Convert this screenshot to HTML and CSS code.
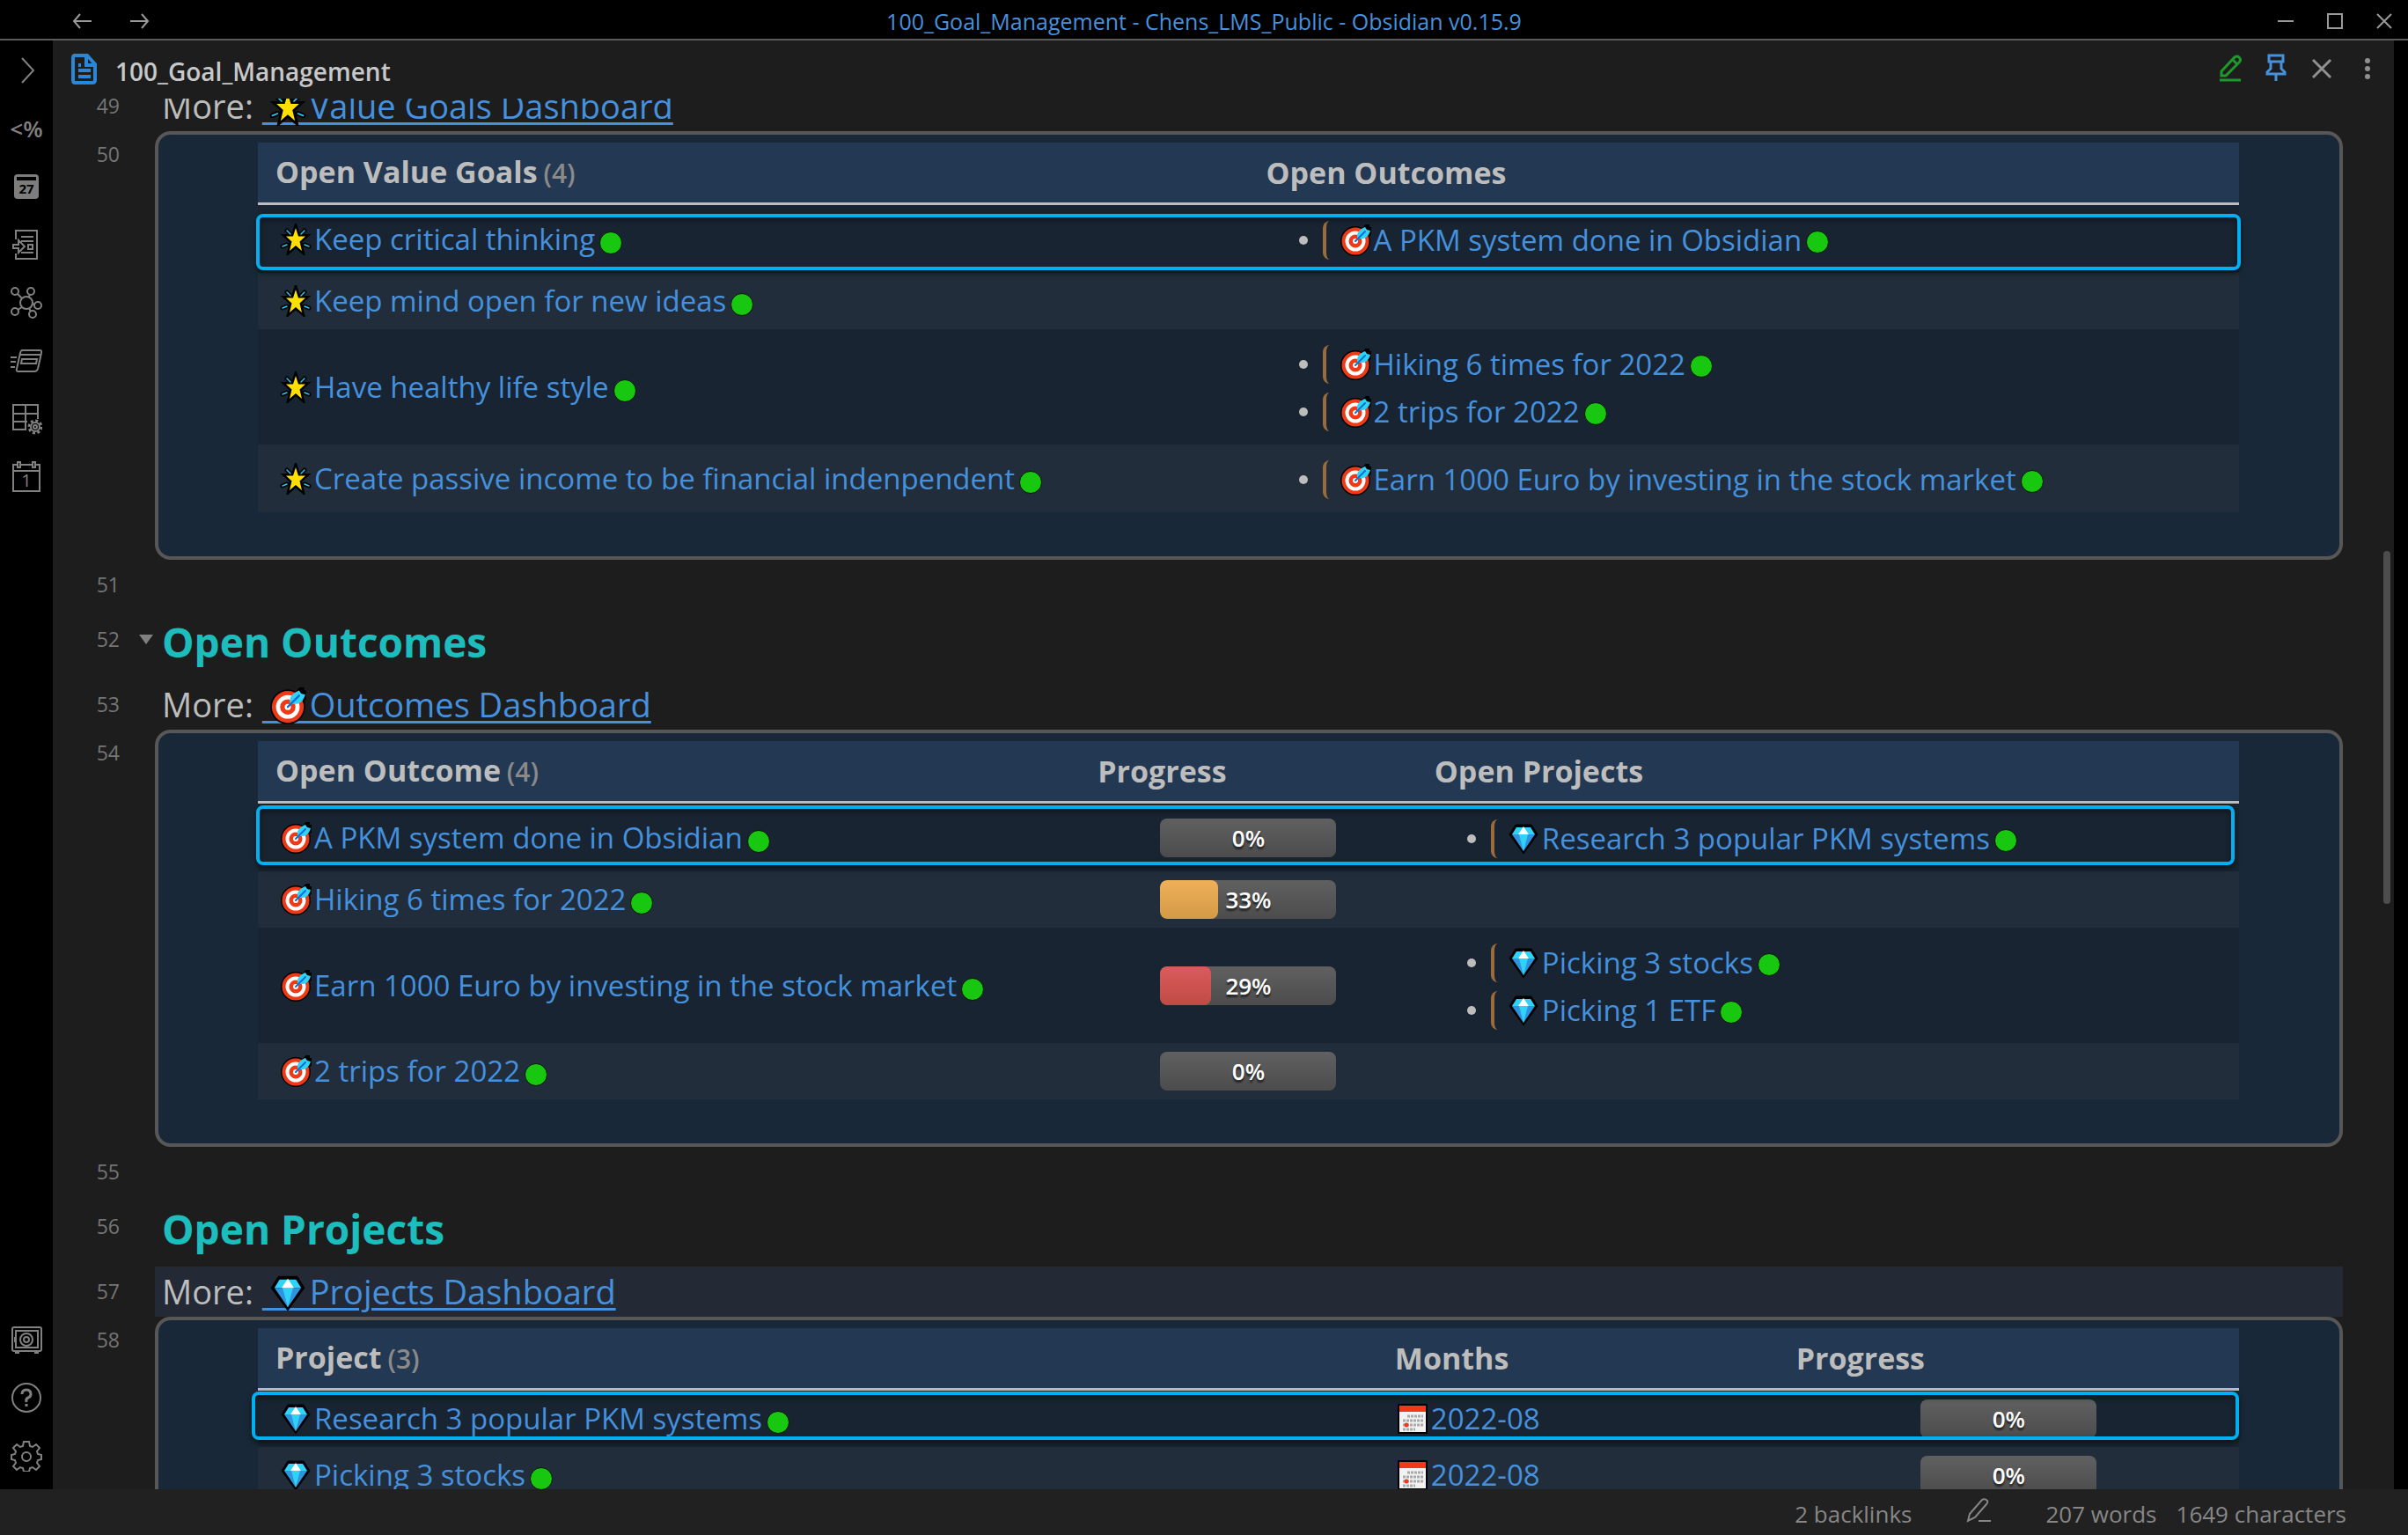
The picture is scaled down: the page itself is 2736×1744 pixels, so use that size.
FILE: index.html
```html
<!DOCTYPE html>
<html lang="en">
<head>
<meta charset="utf-8">
<title>100_Goal_Management - Chens_LMS_Public - Obsidian v0.15.9</title>
<link rel="stylesheet" href="styles.css">
</head>
<body>
<svg class="defs" aria-hidden="true">
  <defs>
    <symbol id="star" viewBox="0 0 36 36">
      <g fill="none" stroke="#000" stroke-width="5" stroke-linecap="round"><path d="M8 8l4 4M28 8l-4 4M3 26l5-2M33 26l-5-2"/></g>
      <path d="M18 5l3 9.500h8l-6.500 6L25 31l-7-6-7 6 2.500-10.500L7 14.500h8z" fill="#ffe000" stroke="#000" stroke-width="5" stroke-linejoin="miter"/>
      <path d="M18 5l3 9.500h8l-6.500 6L25 31l-7-6-7 6 2.500-10.500L7 14.500h8z" fill="#ffe000"/>
      <path d="M8 8l4 4M28 8l-4 4M3 26l5-2M33 26l-5-2" stroke="#2bc8f4" stroke-width="1.500" stroke-linecap="round"/>
    </symbol>
    <symbol id="target" viewBox="0 0 36 36">
      <path d="M25 6l5-5h3v3h3l-1 7-3 3z" fill="#000" stroke="#000" stroke-width="2"/>
      <circle cx="18" cy="19" r="17" fill="#000"/>
      <circle cx="18" cy="19" r="15.500" fill="#f03a17"/>
      <circle cx="18" cy="19" r="9.500" fill="none" stroke="#fff" stroke-width="4"/>
      <circle cx="18" cy="19" r="3" fill="#fff"/>
      <path d="M20 13c0-5 4-8 9-10l2 3 4 1c-2 6-5 10-12 9l-3 1z" fill="#31d2f7"/>
      <path d="M18 19L29 8" stroke="#0a6fd8" stroke-width="2" stroke-linecap="round"/>
    </symbol>
    <symbol id="gem" viewBox="0 0 36 36">
      <path d="M9 2h18l7 11-16 22L2 13z" fill="#000" stroke="#000" stroke-width="1"/>
      <path d="M10 5h16l5 8H5z" fill="#31d2f7"/>
      <path d="M5 13h26L18 32z" fill="#2f94e0"/>
      <path d="M13 13h10l-5 19z" fill="#31d2f7"/>
      <path d="M18 4l6 9H12z" fill="#fff"/>
    </symbol>
    <symbol id="month" viewBox="0 0 36 36">
      <path d="M1 1h34v34H1z" fill="#000"/>
      <path d="M3 3h30v8H3z" fill="#f03a17"/>
      <path d="M3 10h30v23H3z" fill="#f2f2f2"/>
      <path d="M12 15h18M7 20h23M7 25h23M7 30h14" stroke="#aaa" stroke-width="3" stroke-dasharray="3 1"/>
      <circle cx="11" cy="25" r="2.500" fill="#f03a17"/>
    </symbol>
  </defs>
</svg>
<div class="app">
  <header class="titlebar">
    <nav class="history">
      <button aria-label="Back"><svg width="22" height="18" viewBox="0 0 22 18"><path d="M9 1L2 9l7 8M2 9h20"/></svg></button>
      <button aria-label="Forward"><svg width="22" height="18" viewBox="0 0 22 18"><path d="M13 1l7 8-7 8M20 9H0"/></svg></button>
    </nav>
    <div class="window-title">100_Goal_Management - Chens_LMS_Public - Obsidian v0.15.9</div>
    <div class="window-buttons">
      <button aria-label="Minimize"><svg width="18" height="18" viewBox="0 0 18 18"><path d="M0 9h18"/></svg></button>
      <button aria-label="Maximize"><svg width="18" height="18" viewBox="0 0 18 18"><path d="M1 1h16v16H1z"/></svg></button>
      <button aria-label="Close"><svg width="18" height="18" viewBox="0 0 18 18"><path d="M1 1l16 16M17 1L1 17"/></svg></button>
    </div>
  </header>

  <div class="workspace">
    <nav class="ribbon">
      <div class="ribbon-group">
        <button aria-label="Expand"><svg width="36" height="36" viewBox="0 0 36 36"><path d="M13 4l13 14-13 14"/></svg></button>
        <button class="glyph" aria-label="Templater">&lt;%</button>
        <button aria-label="Calendar"><svg width="36" height="36" viewBox="0 0 36 36"><rect x="4" y="4" width="28" height="28" rx="4" fill="#7d7d7d" stroke="none"/><path d="M7 9h22" stroke="#000" stroke-width="4"/><text x="18" y="26" class="cal27">27</text></svg></button>
        <button aria-label="Insert note"><svg width="36" height="36" viewBox="0 0 36 36"><path d="M6 12V2h24v32H6v-6M12 9h14M12 14h14M12 27h14M3 18h6v-5l7 7-7 7v-5H3zM20 18h5v5h-5z"/></svg></button>
        <button aria-label="Graph view"><svg width="36" height="36" viewBox="0 0 36 36"><circle cx="18" cy="18" r="7"/><circle cx="5" cy="5" r="4"/><circle cx="23" cy="5" r="4"/><circle cx="31" cy="21" r="4"/><circle cx="25" cy="31" r="4"/><circle cx="5" cy="28" r="4"/><path d="M8 8l5 5M22 9l-2 3M25 19l2 1M21 24l2 4M8 26l5-3"/></svg></button>
        <button aria-label="Cards"><svg width="36" height="36" viewBox="0 0 36 36"><path d="M13 6h20q3 0 2 3l-4 18q-1 3-4 3H9q-3 0-2-3l4-18q1-3 2-3zM11 11h24M13 16h17l-1 5H12zM0 14h7M0 19h6M0 25h5"/></svg></button>
        <button aria-label="Table settings"><svg width="36" height="36" viewBox="0 0 36 36"><path d="M18 30H3V2h28v16M3 12h28M3 21h16M17 2v28"/><circle cx="28" cy="27" r="5"/><circle cx="28" cy="27" r="2"/><circle cx="28" cy="27" r="7" stroke-width="3" stroke-dasharray="3 2.500"/></svg></button>
        <button aria-label="Daily note"><svg width="36" height="36" viewBox="0 0 36 36"><path d="M8 4H3v30h30V4h-4M12 4h12M3 11h30M8 1h3v6H8zM25 1h3v6h-3z"/><text x="18" y="29" class="cal1">1</text></svg></button>
      </div>
      <div class="ribbon-group">
        <button aria-label="Vault"><svg width="36" height="36" viewBox="0 0 36 36"><rect x="2" y="4" width="33" height="27" rx="2"/><rect x="6" y="8" width="25" height="19"/><circle cx="18" cy="18" r="7"/><circle cx="18" cy="18" r="3"/><path d="M5 33h5M27 33h5M5 15v6"/></svg></button>
        <button aria-label="Help"><svg width="36" height="36" viewBox="0 0 36 36"><circle cx="18" cy="18" r="16"/><path d="M13 14q0-5 5-5t5 5q0 3-3 4t-2 5M18 25v3" stroke-width="3"/></svg></button>
        <button aria-label="Settings"><svg width="36" height="36" viewBox="0 0 36 36"><path d="M15 2h6l1 5 3 1 4-3 4 4-3 4 1 3 4 1v5l-4 1-1 3 3 4-4 4-4-3-3 1-1 4h-6l-1-4-3-1-4 3-4-4 3-4-1-3-4-1v-5l4-1 1-3-3-4 4-4 4 3 3-1z"/><circle cx="18" cy="19" r="5"/></svg></button>
      </div>
    </nav>

    <main class="pane">
      <div class="view-header">
        <svg class="file" width="32" height="36" viewBox="0 0 32 36"><path d="M5 2h14l9 10v18q0 3-3 3H5q-2 0-2-3V5q0-3 2-3zM18 3v10h10M9 13h3M9 19h14M9 26h14"/></svg>
        <h1>100_Goal_Management</h1>
        <div class="actions">
          <button aria-label="Edit"><svg class="green" width="32" height="32" viewBox="0 0 32 32"><path d="M6 25v-5L21 4q3-2 5 0 3 3 0 6L11 25zM19 7l5 5"/><path d="M4 30h24"/></svg></button>
          <button aria-label="Pin"><svg class="blue" width="32" height="32" viewBox="0 0 32 32"><path d="M8 2h16v7H8zM10 9v8l-4 4v2h20v-2l-4-4V9M16 23v8"/></svg></button>
          <button aria-label="Close pane"><svg width="32" height="32" viewBox="0 0 32 32"><path d="M6 7l20 20M26 7L6 27"/></svg></button>
          <button aria-label="More options"><svg class="dots" width="32" height="32" viewBox="0 0 32 32"><circle cx="16" cy="8" r="3"/><circle cx="16" cy="17" r="3"/><circle cx="16" cy="26" r="3"/></svg></button>
        </div>
      </div>

      <div class="editor">
        <div class="line first"><span class="num">49</span><p class="text">More: <a href="#"><span class="lead">&nbsp;<svg class="emoji"><use href="#star"/></svg></span>Value Goals Dashboard</a></p></div>

        <div class="line block"><span class="num">50</span>
          <section class="card">
            <div class="tablewrap">
              <table>
                <colgroup><col class="w50"><col class="w50"></colgroup>
                <thead><tr><th>Open Value Goals <small>(4)</small></th><th>Open Outcomes</th></tr></thead>
                <tbody>
                  <tr><td><a href="#"><svg class="emoji"><use href="#star"/></svg>Keep critical thinking<i class="dot"></i></a></td><td><ul><li><a href="#"><svg class="emoji"><use href="#target"/></svg>A PKM system done in Obsidian<i class="dot"></i></a></li></ul></td></tr>
                  <tr><td><a href="#"><svg class="emoji"><use href="#star"/></svg>Keep mind open for new ideas<i class="dot"></i></a></td><td></td></tr>
                  <tr><td><a href="#"><svg class="emoji"><use href="#star"/></svg>Have healthy life style<i class="dot"></i></a></td><td><ul><li><a href="#"><svg class="emoji"><use href="#target"/></svg>Hiking 6 times for 2022<i class="dot"></i></a></li><li><a href="#"><svg class="emoji"><use href="#target"/></svg>2 trips for 2022<i class="dot"></i></a></li></ul></td></tr>
                  <tr><td><a href="#"><svg class="emoji"><use href="#star"/></svg>Create passive income to be financial indenpendent<i class="dot"></i></a></td><td><ul><li><a href="#"><svg class="emoji"><use href="#target"/></svg>Earn 1000 Euro by investing in the stock market<i class="dot"></i></a></li></ul></td></tr>
                </tbody>
              </table>
              <div class="highlight goals"></div>
            </div>
          </section>
        </div>

        <div class="line"><span class="num">51</span></div>
        <div class="line heading"><span class="num">52</span><span class="fold"></span><h2 class="text">Open Outcomes</h2></div>
        <div class="line"><span class="num">53</span><p class="text">More: <a href="#"><span class="lead">&nbsp;<svg class="emoji"><use href="#target"/></svg></span>Outcomes Dashboard</a></p></div>

        <div class="line block"><span class="num">54</span>
          <section class="card">
            <div class="tablewrap">
              <table>
                <colgroup><col class="w41"><col class="w17"><col class="w41"></colgroup>
                <thead><tr><th>Open Outcome <small>(4)</small></th><th>Progress</th><th>Open Projects</th></tr></thead>
                <tbody>
                  <tr><td><a href="#"><svg class="emoji"><use href="#target"/></svg>A PKM system done in Obsidian<i class="dot"></i></a></td><td><div class="bar"><span>0%</span></div></td><td><ul><li><a href="#"><svg class="emoji"><use href="#gem"/></svg>Research 3 popular PKM systems<i class="dot"></i></a></li></ul></td></tr>
                  <tr><td><a href="#"><svg class="emoji"><use href="#target"/></svg>Hiking 6 times for 2022<i class="dot"></i></a></td><td><div class="bar"><div class="fill orange" style="width:33%"></div><span>33%</span></div></td><td></td></tr>
                  <tr><td><a href="#"><svg class="emoji"><use href="#target"/></svg>Earn 1000 Euro by investing in the stock market<i class="dot"></i></a></td><td><div class="bar"><div class="fill red" style="width:29%"></div><span>29%</span></div></td><td><ul><li><a href="#"><svg class="emoji"><use href="#gem"/></svg>Picking 3 stocks<i class="dot"></i></a></li><li><a href="#"><svg class="emoji"><use href="#gem"/></svg>Picking 1 ETF<i class="dot"></i></a></li></ul></td></tr>
                  <tr><td><a href="#"><svg class="emoji"><use href="#target"/></svg>2 trips for 2022<i class="dot"></i></a></td><td><div class="bar"><span>0%</span></div></td><td></td></tr>
                </tbody>
              </table>
              <div class="highlight outcomes"></div>
            </div>
          </section>
        </div>

        <div class="line"><span class="num">55</span></div>
        <div class="line heading"><span class="num">56</span><h2 class="text">Open Projects</h2></div>
        <div class="line active"><span class="num">57</span><p class="text">More: <a href="#"><span class="lead">&nbsp;<svg class="emoji"><use href="#gem"/></svg></span>Projects Dashboard</a></p></div>

        <div class="line block"><span class="num">58</span>
          <section class="card">
            <div class="tablewrap">
              <table>
                <colgroup><col class="w57"><col class="w20"><col class="w23"></colgroup>
                <thead><tr><th>Project <small>(3)</small></th><th>Months</th><th>Progress</th></tr></thead>
                <tbody>
                  <tr><td><a href="#"><svg class="emoji"><use href="#gem"/></svg>Research 3 popular PKM systems<i class="dot"></i></a></td><td><a href="#"><svg class="emoji month"><use href="#month"/></svg>2022-08</a></td><td><div class="bar"><span>0%</span></div></td></tr>
                  <tr><td><a href="#"><svg class="emoji"><use href="#gem"/></svg>Picking 3 stocks<i class="dot"></i></a></td><td><a href="#"><svg class="emoji month"><use href="#month"/></svg>2022-08</a></td><td><div class="bar"><span>0%</span></div></td></tr>
                </tbody>
              </table>
              <div class="highlight projects"></div>
            </div>
          </section>
        </div>
        <div class="scrollthumb"></div>
      </div>
    </main>
  </div>

  <footer class="statusbar">
    <span>2 backlinks</span>
    <svg class="pencil" width="28" height="28" viewBox="0 0 28 28"><path d="M2 26l2-8L18 2q3-2 6 1 1 2-1 4L10 22zM14 26h14"/></svg>
    <span>207 words</span>
    <span class="chars">1649 characters</span>
  </footer>
</div>
</body>
</html>
```

FILE: styles.css
```css
* { box-sizing: border-box; }
html, body { height: 100%; }
body {
  margin: 0;
  background: #000;
  color: #bdbdbd;
  font-family: "Open Sans", "Noto Sans", sans-serif;
  overflow: hidden;
}
button { background: none; border: 0; padding: 0; color: inherit; font: inherit; display: flex; align-items: center; justify-content: center; }
svg { fill: none; stroke: #808080; stroke-width: 2; flex: none; }
a { color: #4691dd; text-decoration: none; }
h1, h2, p, ul { margin: 0; padding: 0; font-weight: inherit; }
.defs { position: absolute; width: 0; height: 0; }

.app { height: 100vh; display: flex; flex-direction: column; }

.titlebar {
  flex: none;
  height: 46px;
  padding-top: 4px;
  border-bottom: 2px solid #5a5a5a;
  display: grid;
  grid-template-columns: 1fr auto 1fr;
  align-items: center;
}
.history { display: flex; gap: 44px; padding-left: 82px; }
.history svg, .window-buttons svg { stroke: #9a9a9a; }
.window-title { font-size: 25px; line-height: 32px; color: #4691dd; }
.window-buttons { display: flex; gap: 38px; justify-content: flex-end; padding-right: 18px; }

.workspace { flex: 1; min-height: 0; display: flex; padding-right: 16px; }
.ribbon {
  flex: none;
  width: 60px;
  display: flex;
  flex-direction: column;
  justify-content: space-between;
  align-items: center;
  padding: 16px 0 20px;
}
.ribbon-group { display: flex; flex-direction: column; gap: 30px; }
.ribbon button { width: 36px; height: 36px; }
.ribbon .glyph { font-size: 26px; font-weight: 600; color: #808080; }
.cal27 { font-size: 15px; font-weight: 700; text-anchor: middle; fill: #000; stroke: none; }
.cal1 { font-size: 20px; text-anchor: middle; fill: #808080; stroke: none; }

.pane { flex: 1; min-width: 0; display: flex; flex-direction: column; background: #1d1d1d; }
.view-header { flex: none; height: 66px; padding: 0 14px 0 20px; display: flex; align-items: center; gap: 19px; }
.file { stroke: #2c86d6; stroke-width: 4; }
.view-header h1 { padding-top: 4px; font-size: 28px; line-height: 36px; font-weight: 600; color: #c8c8c8; }
.actions { margin-left: auto; margin-bottom: 4px; display: flex; gap: 20px; }
.actions svg { stroke: #909090; stroke-width: 3; }
.actions .green { stroke: #1d9a2b; }
.actions .blue { stroke: #4691dd; }
.actions .dots { fill: #909090; stroke: none; }

.editor { position: relative; flex: 1; min-height: 0; overflow: hidden; padding-right: 58px; }
.line { display: flex; height: 57px; line-height: 57px; }
.line.first { margin-top: -20px; }
.num { flex: none; width: 116px; padding-right: 40px; text-align: right; font-size: 23px; color: #757575; }
.text { flex: 1; padding-left: 8px; font-size: 38px; white-space: nowrap; }
.text a { text-decoration: underline; text-decoration-thickness: 3px; text-underline-offset: 4px; }
.lead { background: linear-gradient(#4691dd, #4691dd) 0 45px / 100% 3px no-repeat; text-decoration: none; }
.heading { position: relative; line-height: 66px; height: 79px; }
.heading .text { font-size: 46px; line-height: 72px; font-weight: 700; color: #1dbdbd; }
.fold { position: absolute; left: 98px; top: 28px; border: 8px solid transparent; border-top: 11px solid #808080; border-bottom: 0; }
.active .text { background: #232a36; }
.line.block { height: auto; }
.block .num { line-height: 52px; }

.card { flex: 1; min-width: 0; border: 4px solid #575757; border-radius: 18px; background: #192838; padding: 9px 114px 50px 113px; }
.tablewrap { position: relative; }
table { width: 100%; border-collapse: separate; border-spacing: 0; table-layout: fixed; font-size: 33px; line-height: 54px; }
.w50 { width: 50%; }
.w41 { width: 41.500%; }
.w17 { width: 17%; }
.w57 { width: 56.500%; }
.w20 { width: 20.250%; }
.w23 { width: 23.250%; }
th { height: 71px; padding: 0 20px; text-align: left; background: #233852; border-bottom: 3px solid #bdbdbd; font-size: 34px; font-weight: 700; }
small { margin-left: -2px; font-size: 30px; font-weight: 600; color: #8a8a8a; }
td { height: 64px; padding: 0 20px; white-space: nowrap; }
tbody tr { background: #182431; }
tbody tr:nth-child(even) { background: #212d3a; }
.emoji { width: 36px; height: 36px; stroke: none; margin: 0 3px 0 5px; vertical-align: -6px; }
.emoji.month { margin-left: 2px; }
.text .emoji { width: 42px; height: 42px; margin: 0 4px 0 -2px; vertical-align: -8px; }
.dot { display: inline-block; width: 26px; height: 26px; margin-left: 5px; border: 1px solid #071207; border-radius: 50%; background: #18c70f; vertical-align: -5px; }
ul { list-style: none; padding: 13px 0 10px 37px; }
li { display: flex; align-items: center; height: 54px; }
li::before { content: ""; width: 10px; height: 10px; margin-right: 17px; border-radius: 50%; background: #bdbdbd; }
li a { display: flex; align-items: center; }
li a::before { content: ""; width: 8px; height: 44px; margin-right: 2px; border-left: 4px solid #9a6c3b; border-radius: 8px 0 0 8px; }
li .dot { margin-top: 4px; }

.bar { position: relative; width: 200px; height: 44px; margin: 0 auto; border-radius: 8px; overflow: hidden; background: linear-gradient(#606060, #4c4c4c); line-height: 40px; text-align: center; }
.bar span { position: relative; font-size: 26px; font-weight: 600; color: #fff; text-shadow: 0 3px 2px #222; }
.fill { position: absolute; left: 0; top: 0; height: 100%; border-radius: 8px; }
.orange { background: linear-gradient(#efb05a, #d39a45); }
.red { background: linear-gradient(#d95c5c, #c04a46); }

.highlight { position: absolute; border: 4px solid #00b0f0; border-radius: 8px; box-shadow: 0 3px 6px #0008, inset 0 3px 6px #0006; }
.goals { left: -2px; right: -2px; top: 81px; height: 64px; }
.outcomes { left: -2px; right: 5px; top: 73px; height: 68px; }
.projects { left: -7px; right: 0; top: 72px; height: 55px; }

.scrollthumb { position: absolute; right: 4px; top: 514px; width: 8px; height: 401px; border-radius: 4px; background: #4d4d4d; }

.statusbar { flex: none; height: 52px; padding: 4px 70px 0 0; display: flex; align-items: center; justify-content: flex-end; background: #212121; font-size: 26px; line-height: 36px; color: #878787; }
.pencil { margin: 0 62px 8px; stroke: #878787; }
.chars { margin-left: 22px; }
```
